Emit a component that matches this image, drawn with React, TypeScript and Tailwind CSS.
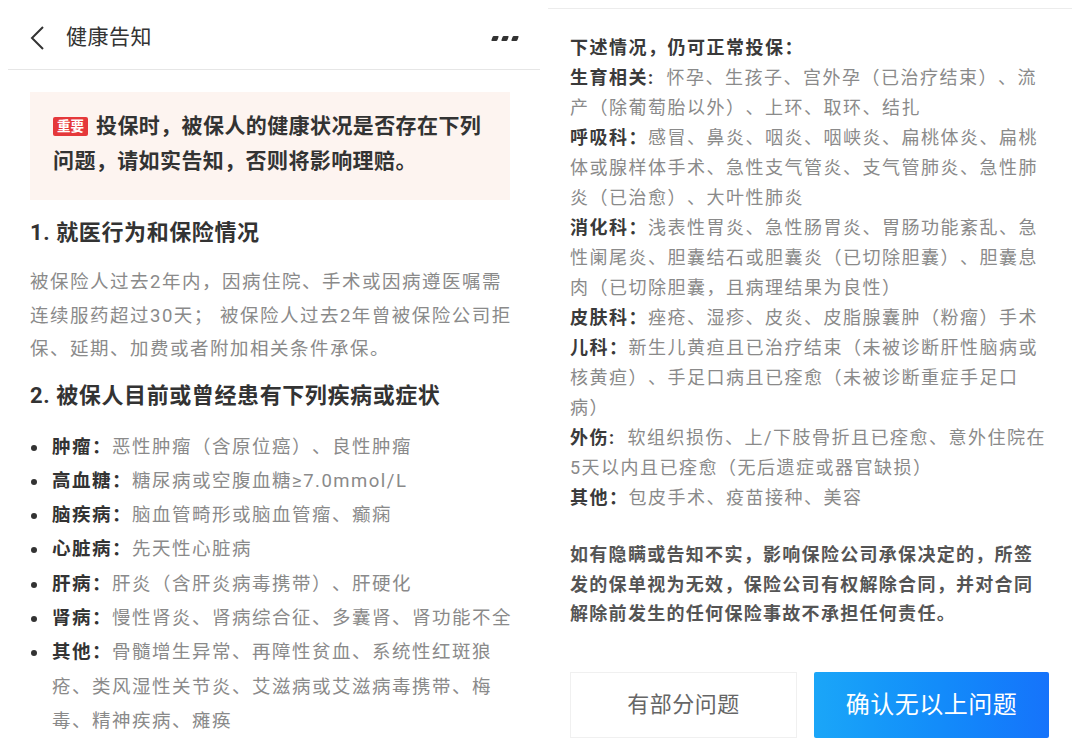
import React from "react";

const font = "font-['Roboto','Noto_Sans_CJK_SC',sans-serif]";

const diseases: { label: string; lines: string[] }[] = [
  { label: "肿瘤：", lines: ["恶性肿瘤（含原位癌）、良性肿瘤"] },
  { label: "高血糖：", lines: ["糖尿病或空腹血糖≥7.0mmol/L"] },
  { label: "脑疾病：", lines: ["脑血管畸形或脑血管瘤、癫痫"] },
  { label: "心脏病：", lines: ["先天性心脏病"] },
  { label: "肝病：", lines: ["肝炎（含肝炎病毒携带）、肝硬化"] },
  { label: "肾病：", lines: ["慢性肾炎、肾病综合征、多囊肾、肾功能不全"] },
  {
    label: "其他：",
    lines: [
      "骨髓增生异常、再障性贫血、系统性红斑狼",
      "疮、类风湿性关节炎、艾滋病或艾滋病毒携带、梅",
      "毒、精神疾病、瘫痪",
    ],
  },
];

// right column, one entry per visual line
const exceptions: { label?: string; text: string }[] = [
  { label: "下述情况，仍可正常投保：", text: "" },
  { label: "生育相关:  ", text: "怀孕、生孩子、宫外孕（已治疗结束）、流" },
  { text: "产（除葡萄胎以外）、上环、取环、结扎" },
  { label: "呼吸科：", text: "感冒、鼻炎、咽炎、咽峡炎、扁桃体炎、扁桃" },
  { text: "体或腺样体手术、急性支气管炎、支气管肺炎、急性肺" },
  { text: "炎（已治愈）、大叶性肺炎" },
  { label: "消化科：", text: "浅表性胃炎、急性肠胃炎、胃肠功能紊乱、急" },
  { text: "性阑尾炎、胆囊结石或胆囊炎（已切除胆囊）、胆囊息" },
  { text: "肉（已切除胆囊，且病理结果为良性）" },
  { label: "皮肤科：", text: "痤疮、湿疹、皮炎、皮脂腺囊肿（粉瘤）手术" },
  { label: "儿科：", text: "新生儿黄疸且已治疗结束（未被诊断肝性脑病或" },
  { text: "核黄疸）、手足口病且已痊愈（未被诊断重症手足口" },
  { text: "病）" },
  { label: "外伤:  ", text: "软组织损伤、上/下肢骨折且已痊愈、意外住院在" },
  { text: "5天以内且已痊愈（无后遗症或器官缺损）" },
  { label: "其他：", text: "包皮手术、疫苗接种、美容" },
];

function LeftPanel() {
  return (
    <div className="flex w-[540px] shrink-0 flex-col">
      {/* Header */}
      <div className="ml-[8px] flex h-[70px] items-center border-b border-[#e6e6e6] pt-[7px]">
        <svg width="18" height="26" viewBox="0 0 18 26" className="ml-[21px]">
          <polyline points="14,2 3,13 14,24" fill="none" stroke="#333" strokeWidth="2" />
        </svg>
        <span className="ml-[19px] text-[21px] tracking-[0.5px] text-[#333]">健康告知</span>
        <div className="ml-auto mr-[22px] flex items-center gap-[4px]">
          <span className="h-[5px] w-[6px] -skew-x-[20deg] rounded-[1px] bg-[#333]" />
          <span className="h-[5px] w-[6px] -skew-x-[20deg] rounded-[1px] bg-[#333]" />
          <span className="h-[5px] w-[6px] -skew-x-[20deg] rounded-[1px] bg-[#333]" />
        </div>
      </div>

      <div className="px-[30px]">
        {/* Notice box */}
        <div className="mt-[22px] bg-[#fdf4f0] px-[23px] pt-[17px] pb-[21px] text-[21px] font-bold leading-[35px] tracking-[0.4px] text-[#333]">
          <div className="flex items-center whitespace-nowrap">
            <span className="mr-[8px] inline-flex h-[19px] items-center rounded-[2px] bg-[#e5383b] px-[4px] text-[13.5px] leading-none font-bold tracking-normal text-white">
              重要
            </span>
            投保时，被保人的健康状况是否存在下列
          </div>
          <div className="whitespace-nowrap">问题，请如实告知，否则将影响理赔。</div>
        </div>

        <h2 className="mt-[18px] text-[22px] font-bold leading-[30px] tracking-[0.6px] text-[#333]">
          1. 就医行为和保险情况
        </h2>
        <div className="mt-[18px] text-[18.5px] leading-[33.5px] tracking-[1.5px] text-[#8a8a8a]">
          <div className="whitespace-nowrap">被保险人过去2年内，因病住院、手术或因病遵医嘱需</div>
          <div className="whitespace-nowrap">连续服药超过30天； 被保险人过去2年曾被保险公司拒</div>
          <div className="whitespace-nowrap">保、延期、加费或者附加相关条件承保。</div>
        </div>

        <h2 className="mt-[14px] text-[22px] font-bold leading-[30px] tracking-[0.6px] text-[#333]">
          2. 被保人目前或曾经患有下列疾病或症状
        </h2>
        <ul className="mt-[19px] text-[18.5px] leading-[34.3px] tracking-[1.5px] text-[#8a8a8a]">
          {diseases.map((d) => (
            <li key={d.label} className="flex">
              <span className="mt-[15px] ml-[1px] mr-[15px] h-[6px] w-[6px] shrink-0 rounded-full bg-[#333]" />
              <div>
                {d.lines.map((l, i) => (
                  <div key={i} className="whitespace-nowrap">
                    {i === 0 && <span className="font-bold text-[#333]">{d.label}</span>}
                    {l}
                  </div>
                ))}
              </div>
            </li>
          ))}
        </ul>
      </div>
    </div>
  );
}

function RightPanel() {
  return (
    <div className="ml-[8px] flex w-[532px] shrink-0 flex-col pt-[8px]">
      <div className="mr-[8px] border-t border-[#ececec]" />
      <div className="px-[22px]">
        <div className="mt-[24px] text-[18px] leading-[30px] tracking-[1.5px] text-[#8a8a8a]">
          {exceptions.map((e, i) => (
            <div key={i} className="whitespace-pre">
              {e.label && <span className="font-bold text-[#3a3a3a]">{e.label}</span>}
              {e.text}
            </div>
          ))}
        </div>

        <div className="mt-[27px] text-[18px] font-bold leading-[29.5px] tracking-[1.3px] text-[#555]">
          <div className="whitespace-nowrap">如有隐瞒或告知不实，影响保险公司承保决定的，所签</div>
          <div className="whitespace-nowrap">发的保单视为无效，保险公司有权解除合同，并对合同</div>
          <div className="whitespace-nowrap">解除前发生的任何保险事故不承担任何责任。</div>
        </div>

        <div className="mt-[43px] flex gap-[17px]">
          <button className="flex h-[66px] w-[227px] items-center justify-center border border-[#f0f0f0] bg-white text-[22px] tracking-[0.5px] text-[#666]">
            有部分问题
          </button>
          <button className="flex h-[66px] w-[235px] items-center justify-center rounded-[2px] bg-gradient-to-r from-[#1ba6f8] to-[#1673fb] text-[24px] tracking-[0.5px] text-white">
            确认无以上问题
          </button>
        </div>
      </div>
    </div>
  );
}

export default function App() {
  return (
    <div className={`flex h-[755px] w-[1080px] overflow-hidden bg-white [text-spacing-trim:space-all] ${font}`}>
      <LeftPanel />
      <RightPanel />
    </div>
  );
}
